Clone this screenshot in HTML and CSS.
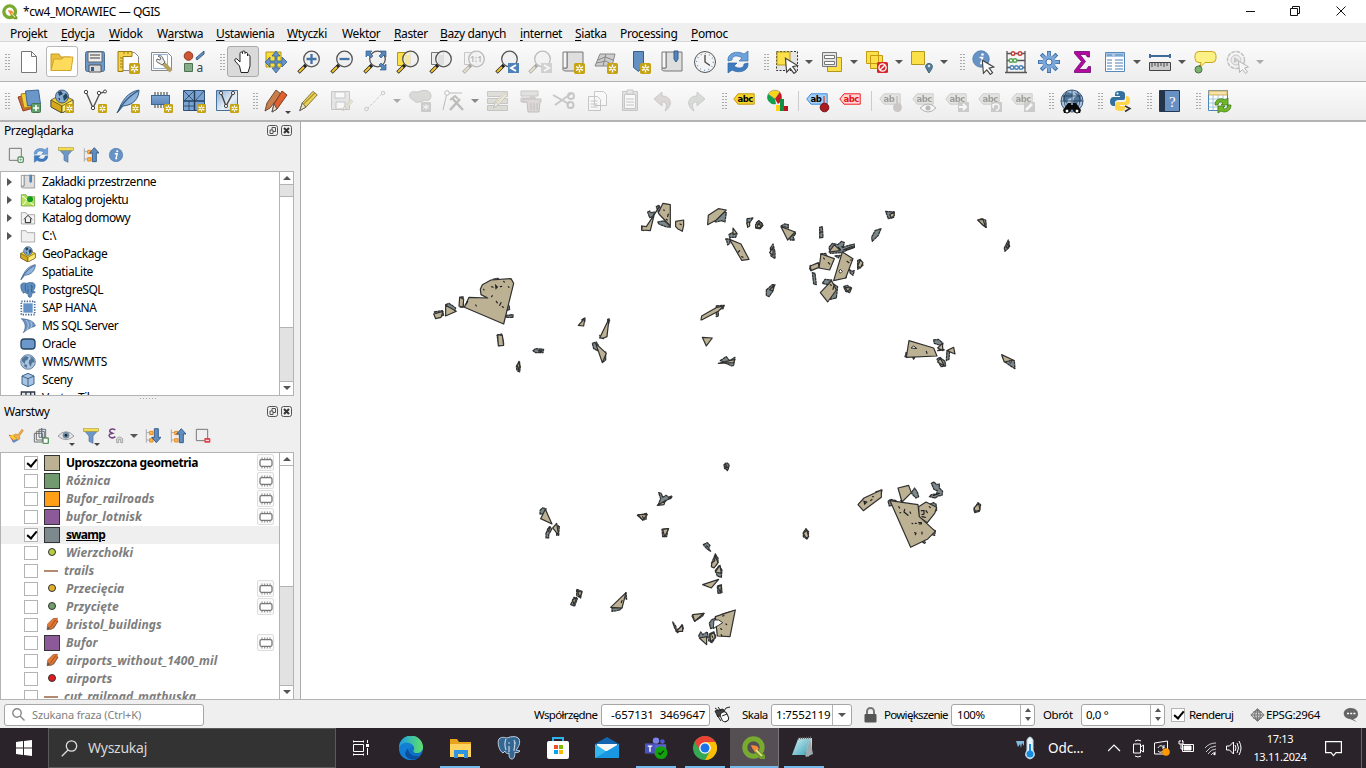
FILE: index.html
```html
<!DOCTYPE html>
<html lang="pl">
<head>
<meta charset="utf-8">
<title>*cw4_MORAWIEC — QGIS</title>
<link rel="stylesheet" href="styles.css">
</head>
<body>
<svg class="defs" width="0" height="0">
  <defs>
    <linearGradient id="gChip" x1="0" y1="0" x2="0" y2="1"><stop offset="0" stop-color="#7fa6d2"/><stop offset="1" stop-color="#5c86ba"/></linearGradient>
    <linearGradient id="gPane" x1="0" y1="0" x2="1" y2="1"><stop offset="0" stop-color="#8aacd2"/><stop offset=".6" stop-color="#e8eff7"/><stop offset="1" stop-color="#a9c3e0"/></linearGradient>
    <linearGradient id="gEdge" x1="0" y1="0" x2="1" y2="0"><stop offset="0" stop-color="#1b9de2"/><stop offset="1" stop-color="#5fe06a"/></linearGradient>
    <linearGradient id="gNote" x1="0" y1="0" x2="1" y2="1"><stop offset="0" stop-color="#d5f3f8"/><stop offset="1" stop-color="#3a9fb4"/></linearGradient>
  </defs>
  <symbol id="star" viewBox="0 0 10 10"><rect width="10" height="10" rx="1.5" fill="#c6a313"/><path d="M5 1.3v7.400M1.800 3.200l6.400 3.600M1.800 6.800l6.400-3.600" stroke="#fff" stroke-width="1.3"/><circle cx="5" cy="5" r="1" fill="#c6a313"/></symbol>
  <symbol id="lens" viewBox="0 0 24 24"><path d="M1.5 22.5L9 15" stroke="#222" stroke-width="3.4"/><path d="M2 22L7 17" stroke="#f3c42e" stroke-width="2"/><circle cx="14.5" cy="9" r="7.8" fill="#efefef" fill-opacity=".85" stroke="#555" stroke-width="1.3"/></symbol>
  <symbol id="refresh" viewBox="0 0 24 24"><path d="M2 11C1 3 11 0 18 4l4-3v10h-9l3-3C12 5 6 5 6 10z" fill="#6ea2da" stroke="#3873b0" stroke-width=".7"/><path d="M22 13c1 8-9 11-16 7l-4 3V13h9l-3 3c4 3 10 3 10-2z" fill="#3f7cc0" stroke="#2c66a5" stroke-width=".7"/></symbol>
  <symbol id="info" viewBox="0 0 24 24"><circle cx="12" cy="12" r="11" fill="#6692c5" stroke="#4a77ab"/><path d="M11 10h3l-2 8h2M10 10h2" stroke="#fff" stroke-width="2.2" fill="none"/><circle cx="14" cy="6" r="1.7" fill="#fff"/></symbol>
  <symbol id="cursor" viewBox="0 0 12 14"><path d="M1 1l10 6-4 1 3 4-2 1.5-3-4-3 3z" fill="#fff" stroke="#444"/></symbol>
  <symbol id="globe" viewBox="0 0 24 24"><circle cx="12" cy="12" r="11" fill="#aac4df" stroke="#3a5878"/><path d="M3 7l5-4 5 2-2 4-3 1-1 5-4-4zM14 3l6 3 2 6-4 1-2 6-3-5 1-5 3-2zM7 15l4 2-1 4-4-3z" fill="#4f7498"/></symbol>
  <symbol id="box" viewBox="0 0 24 24"><path d="M1 11l11-6 11 6v7l-11 6-11-6z" fill="#f3d331" stroke="#39362a" stroke-width=".7"/><path d="M1 11l11 6v7L1 18z" fill="#d6a91c" stroke="#39362a" stroke-width=".7"/><path d="M12 17l11-6v7l-11 6z" fill="#ffec6b" stroke="#39362a" stroke-width=".7"/><circle cx="12" cy="7.500" r="6.500" fill="#86abd1" stroke="#27425e" stroke-width=".8"/><path d="M8 3l3-1 2 3-4 2zM13 7l3-3 2 4-4 4zM8 9l2 0 0 3z" fill="#25425f"/></symbol>
  <symbol id="feather" viewBox="0 0 24 24"><path d="M2 23C6 11 12 3 23 1c0 8-5 15-16 16z" fill="#8db2dc" stroke="#365a82"/><path d="M1 24C7 13 13 7 22 2" stroke="#365a82" fill="none" stroke-width="1.3"/></symbol>
  <symbol id="elephant" viewBox="0 0 24 24"><path d="M2 3c3-3 7-1 8-1 5-2 10-2 12 1 2 4-1 9-3 11l4 1c-2 2-4 2-5 1 0 4-1 7-3 7-3 0-3-3-3-6-2 1-4 0-4-2l-2 2C2 15 0 6 2 3z"/><path d="M9 3c-2 4-1 8 0 11M17 4c2 4 0 7 0 11M12 10v6M19 7h-2M11 7h2" stroke-width="1.2" fill="none"/></symbol>
  <symbol id="chip" viewBox="0 0 14 12"><path d="M3 .5v11M5.700 .5v11M8.300 .5v11M11 .5v11" stroke="#888"/><rect x="1" y="2.700" width="12" height="6.600" rx="1.500" fill="#fff" stroke="#777" stroke-width="1.3"/></symbol>
  <symbol id="funnel" viewBox="0 0 24 24"><path d="M1 3h22l-8 9v11l-6-3v-8z" fill="#6d97c8" stroke="#4a719d"/><rect x="1" y="1" width="22" height="4" fill="#f2dc52" stroke="#a99322" stroke-width=".8"/></symbol>
  <symbol id="up" viewBox="0 0 24 24"><path d="M2 2v20M2 7h6M2 18h6" stroke="#aaa" stroke-width="1.500"/><path d="M7 5h5v5H7zM7 16h5v5H7z" fill="#fbb75f" stroke="#ee8a1a" stroke-width="1.500"/><path d="M17 1l7 8h-4v13h-6V9h-4z" fill="#5f8dc0" stroke="#2c5480" stroke-width="1.300"/></symbol>
  <symbol id="down" viewBox="0 0 24 24"><path d="M2 2v20M2 7h6M2 18h6" stroke="#aaa" stroke-width="1.500"/><path d="M7 5h5v5H7zM7 16h5v5H7z" fill="#fbb75f" stroke="#ee8a1a" stroke-width="1.500"/><path d="M17 22l7-8h-4V1h-6v13h-4z" fill="#5f8dc0" stroke="#2c5480" stroke-width="1.300"/></symbol>
  <symbol id="pen" viewBox="0 0 24 24"><path d="M2 23l3-9L17 1l5 4-13 14z" fill="#e9d15a" stroke="#77682c"/><path d="M7 15L19 3" stroke="#a8912c" stroke-width="1.4"/><path d="M2 23l3-9 4 5z" fill="#eadfc4" stroke="#555"/></symbol>
  <symbol id="rpen" viewBox="0 0 24 24"><path d="M1 22l2-8L12 1l5 4-11 14z" fill="#c97f4c" stroke="#6f4a35"/><path d="M8 23l2-8L18 2l5 4-10 14z" fill="#e0602e" stroke="#7c3b25"/><path d="M8 23l2-8 3 5z" fill="#f3d9c1" stroke="#555"/></symbol>
  <symbol id="edit" viewBox="0 0 24 24"><path d="M7 23l2-9L17 2l6 5-8 13z" fill="#6f6f6f"/><path d="M2 23l1-11L13 2l8-1-1 9-9 11z" fill="#e07a35" stroke="#8a4a22"/><path d="M8 18L18 4" stroke="#b9501f" stroke-width="2"/><path d="M2 23l1-7 5 4z" fill="#555"/></symbol>
  <symbol id="qgis" viewBox="0 0 24 24"><circle cx="11.5" cy="11.5" r="8.7" fill="none" stroke="#79aa30" stroke-width="5"/><path d="M14 13l9 6v4h-5l-6-8z" fill="#6f9c2c"/><path d="M9 9l6 1 2 3-4 3-3-4z" fill="#f48a35"/><path d="M14 14l6 6" stroke="#f7e58b" stroke-width="1.6"/></symbol>
  <symbol id="tag" viewBox="0 0 22 12"><path d="M5 .8h16.2v10.4H5L.8 6z"/></symbol>
  <symbol id="book" viewBox="0 0 24 24"><path d="M6 2h16v19H5c-4 0-4-3-2-3h3z" fill="#dedede" stroke="#777"/><path d="M2 2h4v16H2z" fill="#f7f7f7" stroke="#777"/></symbol>
  <symbol id="page" viewBox="0 0 24 24"><path d="M2.500 2.500h16l4 4v14h-20z" fill="#fff" stroke="#888"/></symbol>
</svg>

<header class="titlebar">
  <svg class="logo" viewBox="0 0 24 24"><use href="#qgis"/></svg>
  <span class="caption">*cw4_MORAWIEC — QGIS</span>
  <svg class="winctl" width="116" height="22" viewBox="0 0 116 22" fill="none" stroke="#111"><path d="M6 10.500h9"/><path d="M50.500 7.500h7v7h-7zM52.500 7.500v-2h7v7h-2"/><path d="M96.500 5.500l9 9M105.500 5.500l-9 9"/></svg>
</header>

<nav class="menu">
  <span style="width:51px">Pro<u>j</u>ekt</span><span style="width:48px"><u>E</u>dycja</span><span style="width:48px"><u>W</u>idok</span><span style="width:59px">W<u>a</u>rstwa</span><span style="width:71px"><u>U</u>stawienia</span><span style="width:55px"><u>W</u>tyczki</span><span style="width:52px">Wekt<u>o</u>r</span><span style="width:46px"><u>R</u>aster</span><span style="width:80px"><u>B</u>azy danych</span><span style="width:55px"><u>i</u>nternet</span><span style="width:45px"><u>S</u>iatka</span><span style="width:71px">Pro<u>c</u>essing</span><span><u>P</u>omoc</span>
</nav>

<div class="toolbar">
  <i class="grip first"></i>
  <b><svg viewBox="0 0 24 24"><path d="M4.500 1.500h10l5 5v16h-15z" fill="#fff" stroke="#777"/><path d="M14.500 1.500v5h5" fill="none" stroke="#777"/></svg></b>
  <b class="framed"><svg viewBox="0 0 24 24"><path d="M1 20V4h8l2 3h9v4" fill="#eac03c" stroke="#c39a26"/><path d="M1 20.500L4 9h8l2-2h9l-2 13.500z" fill="#ffdb5c" stroke="#d0a52c"/></svg></b>
  <b><svg viewBox="0 0 24 24"><rect x="2.500" y="1.500" width="19" height="20" rx="2" fill="#6d98c8" stroke="#47719d"/><path d="M5 2h14v10H5z" fill="#eee" stroke="#666"/><path d="M7 5h10M7 8h10" stroke="#777" stroke-width="1.500"/><path d="M6 15h12v7H6z" fill="#ddd" stroke="#555"/><path d="M8 17h3v4H8z" fill="#345f8c"/></svg></b>
  <b><svg viewBox="0 0 24 24"><use href="#page"/><path d="M2 1.500h14v5H7v15H2z" fill="#f5d24d" stroke="#9b7c14"/><path d="M4 8h3M4 11h3M4 14h3M4 17h3M8 2v2M12 2v2" stroke="#9b7c14"/><use href="#star" x="13" y="13" width="11" height="11"/></svg></b>
  <b><svg viewBox="0 0 24 24"><use href="#page"/><path d="M4.500 4.500h14v14h-14z" fill="#fff" stroke="#8fb3dc"/><path d="M14 13l8 8" stroke="#b5a060" stroke-width="4"/><path d="M9 6c2-1 5 0 5 3l2 3-3 3-3-2c-2 0-3-2-2-4l3 1 1-2z" fill="#eee" stroke="#666"/></svg></b>
  <b><svg viewBox="0 0 24 24"><circle cx="6.500" cy="6" r="4.300" fill="#cf5635" stroke="#8e3822"/><path d="M14 8l8-7v3l-7 6z" fill="#6792c6" stroke="#345b86"/><path d="M2.500 13.500h8v8h-8z" fill="#84ac88" stroke="#4a7350"/><text x="14.500" y="21.500" font-size="12" font-weight="400" fill="#444">a</text></svg></b>
  <i class="grip"></i>
  <b class="pressed"><svg viewBox="0 0 24 24"><path d="M7 16L2.500 11c-1-2 1-3 2-2l3 3V3.500c0-2 2.500-2 2.500 0V2c0-1.500 2.500-1.500 2.500 0v1.500c0-1.500 2.500-1.500 2.500 0V6c0-1.500 2.500-1.500 2.500.5V16l-2 6.500h-7z" fill="#fff" stroke="#222" transform="translate(1.500)"/></svg></b>
  <b><svg viewBox="0 0 24 24"><path d="M2 2h15v15H2z" fill="#fbdd39" stroke="#b3961d"/><path d="M12 1l4 5h-3v5h5V7l5 5-5 5v-4h-5v5h3l-4 5-4-5h3v-5H6v4l-5-5 5-5v4h5V6H8z" fill="#6593c7" stroke="#345f8d" stroke-width=".8"/></svg></b>
  <b><svg viewBox="0 0 24 24"><use href="#lens"/><path d="M9.500 9h10M14.500 4v10" stroke="#4473a5" stroke-width="2.300"/></svg></b>
  <b><svg viewBox="0 0 24 24"><use href="#lens"/><path d="M9.500 9h10" stroke="#4473a5" stroke-width="2.300"/></svg></b>
  <b><svg viewBox="0 0 24 24"><use href="#lens"/><path d="M3 1h6L7 3l3 3-2 2-3-3-2 2zM23 1h-6l2 2-3 3 2 2 3-3 2 2zM23 20h-6l2-2-3-3 2-2 3 3 2-2z" fill="#5485bb" stroke="#345f8d" stroke-width=".7"/></svg></b>
  <b><svg viewBox="0 0 24 24"><path d="M1.500 2.500h13v13h-13z" fill="#fbe04a" stroke="#b3961d"/><use href="#lens"/><path d="M9 5h5v9H9z" fill="#f3e7a1"/></svg></b>
  <b><svg viewBox="0 0 24 24"><path d="M2.500 2.500h12v12h-12z" fill="#eee" stroke="#777"/><use href="#lens"/><path d="M9 5h5v9H9z" fill="#dedede"/></svg></b>
  <b class="off"><svg viewBox="0 0 24 24"><path d="M2.500 2.500h12v12h-12z" fill="#eee" stroke="#777"/><use href="#lens"/><text x="8" y="12" font-size="8.500" font-weight="700" fill="#555">1:1</text></svg></b>
  <b><svg viewBox="0 0 24 24"><use href="#lens"/><path d="M13 13h11v10H13z" fill="#4e81b7"/><path d="M21 15l-5 3 5 3" stroke="#fff" stroke-width="2" fill="none"/></svg></b>
  <b class="off"><svg viewBox="0 0 24 24"><use href="#lens"/><path d="M13 13h11v10H13z" fill="#999"/><path d="M16 15l5 3-5 3" stroke="#fff" stroke-width="2" fill="none"/></svg></b>
  <b><svg viewBox="0 0 24 24"><use href="#book"/><use href="#star" x="13" y="13" width="11" height="11"/></svg></b>
  <b><svg viewBox="0 0 24 24"><path d="M6 4h15l-3 12H1z" fill="#ccc" stroke="#888"/><path d="M4 10l7-3 8 3M9 16l3-12M2 13l10-2 5 3" stroke="#888" fill="none"/><use href="#star" x="13" y="13" width="11" height="11"/></svg></b>
  <b><svg viewBox="0 0 24 24"><path d="M6.500 1.500h10v14l-5 6-5-4z" fill="#6290c3" stroke="#345f8d"/><use href="#star" x="13" y="13" width="11" height="11"/></svg></b>
  <b><svg viewBox="0 0 24 24"><use href="#book"/><path d="M14 1h4v8l-2 3-2-3z" fill="#5484bb" stroke="#345f8d"/></svg></b>
  <b><svg viewBox="0 0 24 24"><circle cx="12" cy="12" r="10.500" fill="#f4f4f4" stroke="#555"/><circle cx="12" cy="12" r="8.300" fill="none" stroke="#6d9acb" stroke-dasharray="1 3.300" stroke-width="1.300"/><path d="M12 5v7l5 3.500" fill="none" stroke="#444" stroke-width="1.300"/></svg></b>
  <b><svg viewBox="0 0 24 24"><use href="#refresh"/></svg></b>
  <i class="grip"></i>
  <b><svg viewBox="0 0 24 24"><path d="M1.500 1.500h21v19h-21z" fill="#e5e5e5" stroke="#333" stroke-dasharray="2 1.500"/><path d="M2 2h13v13H2z" fill="#fbe04a" stroke="#b39a1a"/><use href="#cursor" x="9" y="7" width="15" height="17"/></svg></b><i class="arr"></i>
  <b><svg viewBox="0 0 24 24"><path d="M7.500 7.500h14v14h-14z" fill="#fbe04a" stroke="#b3961d"/><path d="M2.500 2.500h14v14h-14z" fill="#e4e4e4" stroke="#777"/><path d="M4.500 5.500h10v3h-10zM4.500 11.500h10v3h-10z" fill="#fff" stroke="#777"/></svg></b><i class="arr"></i>
  <b><svg viewBox="0 0 24 24"><path d="M1.500 1.500h12v12h-12zM5.500 5.500h12v13h-12z" fill="#fbe04a" stroke="#c39a12"/><rect x="12" y="12" width="11" height="11" rx="1.500" fill="#d8262b"/><circle cx="17.500" cy="17.500" r="3.600" fill="none" stroke="#fff" stroke-width="1.400"/><path d="M15 20l5-5" stroke="#fff" stroke-width="1.400"/></svg></b><i class="arr"></i>
  <b><svg viewBox="0 0 24 24"><path d="M1.500 1.500h13v13h-13z" fill="#fbe04a" stroke="#b3961d"/><path d="M19 23c-3-5-4-6-3-8s5-2 6 0 0 4-3 8z" fill="#547d99" stroke="#3c6178"/><circle cx="19" cy="16" r="1.300" fill="#ddd"/></svg></b><i class="arr"></i>
  <i class="grip"></i>
  <b><svg viewBox="0 0 24 24"><use href="#info" x="1" y="0" width="18" height="18"/><use href="#cursor" x="10" y="9" width="14" height="16"/></svg></b>
  <b><svg viewBox="0 0 24 24"><path d="M3 1v21M21 1v21M1 22.500h22M3 3.500h18M3 10.500h18M3 17.500h18" stroke="#555" stroke-width="1.300"/><g fill="#fff" stroke-width="1.400"><g stroke="#c4423c"><circle cx="9" cy="3.500" r="1.800"/><circle cx="16" cy="3.500" r="1.800"/></g><g stroke="#56a856"><circle cx="7" cy="10.500" r="1.800"/><circle cx="11" cy="10.500" r="1.800"/></g><g stroke="#4a82b8"><circle cx="8" cy="17.500" r="1.800"/><circle cx="12.500" cy="17.500" r="1.800"/><circle cx="17" cy="17.500" r="1.800"/></g></g></svg></b>
  <b><svg viewBox="0 0 24 24"><path d="M12 1v22M1 12h22M4.200 4.200l15.600 15.600M19.800 4.200L4.200 19.800" stroke="#3f73ae" stroke-width="4"/><path d="M12 2v20M2 12h20M5 5l14 14M19 5L5 19" stroke="#7ba6d6" stroke-width="2.400"/><circle cx="12" cy="12" r="6.800" fill="#7ba6d6"/><circle cx="12" cy="12" r="3" fill="#f7f7f7" stroke="#3f73ae"/></svg></b>
  <b><svg viewBox="0 0 24 24"><path d="M4.500 1.500h15V7h-2l-2-2.500H10l5.500 7-6.500 8h7.500l2-3h2v6h-16v-2l7-9-7-8z" fill="#b5089e" stroke="#6a0a72" stroke-width=".8"/></svg></b>
  <b><svg viewBox="0 0 24 24"><path d="M2.500 2.500h19v19h-19z" fill="#fff" stroke="#5687bd"/><path d="M3 3h18v4H3z" fill="#a9c6e5"/><path d="M4 5h5M12 5h8M4 10h5M12 10h8M4 13h5M12 13h8M4 16h5M12 16h8M4 19h5M12 19h8" stroke="#4d80b8"/></svg></b><i class="arr"></i>
  <b><svg viewBox="0 0 24 24"><path d="M2 6h20M2 4v4M22 4v4" stroke="#3f6a99" stroke-width="2"/><path d="M1.500 12.500h21v8h-21z" fill="#ccc" stroke="#444"/><path d="M4 13v4M7 13v3M10 13v4M13 13v3M16 13v4M19 13v3" stroke="#444"/></svg></b><i class="arr"></i>
  <b><svg viewBox="0 0 24 24"><path d="M6 1.500h13q4 0 4 4v3q0 4-4 4h-7l-5 5 1-5H6q-4 0-4-4v-3q0-4 4-4z" fill="#fdf084" stroke="#c9a61c"/><path d="M7 15l-2 6" stroke="#333"/><circle cx="5.500" cy="19.500" r="3.500" fill="#7bb26f" stroke="#4b6f45"/></svg></b>
  <b class="off"><svg viewBox="0 0 24 24"><circle cx="10" cy="10" r="8.500" fill="#f4f4f4" stroke="#666" stroke-width="1.500" stroke-dasharray="4 1"/><circle cx="10" cy="10" r="5" fill="#ddd" stroke="#777"/><path d="M8 7l5 3-5 3z" fill="#777"/><use href="#cursor" x="11" y="10" width="13" height="14"/></svg></b><i class="arr pale"></i>
</div>

<div class="toolbar second">
  <i class="grip first"></i>
  <b><svg viewBox="0 0 24 24"><path d="M1 8l12-3 4 14-11 3z" fill="#cd6936" stroke="#8e4423"/><path d="M4 5l14-2 2 14-13 2z" fill="#f2cc3a" stroke="#a17f18"/><path d="M9 2l13-1 2 14-13 2z" fill="#6b96c8" stroke="#3d6792" transform="translate(-.500)"/><rect x="14.500" y="14.500" width="9" height="9" rx="1" fill="#61a06c" stroke="#47764e"/><path d="M19 16v6M16 19h6" stroke="#fff" stroke-width="1.600"/></svg></b>
  <b><svg viewBox="0 0 24 24"><use href="#box"/><use href="#star" x="15" y="15" width="9" height="9"/></svg></b>
  <b><svg viewBox="0 0 24 24"><path d="M3 3l7 16L17 4l5-1" fill="none" stroke="#555" stroke-width="1.400"/><g fill="#fff" stroke="#444"><circle cx="3" cy="3" r="1.700"/><circle cx="10" cy="19" r="1.700"/><circle cx="16" cy="4" r="1.700"/><circle cx="22" cy="2.500" r="1.500"/></g><use href="#star" x="15" y="15" width="9" height="9"/></svg></b>
  <b><svg viewBox="0 0 24 24"><use href="#feather"/><use href="#star" x="15" y="15" width="9" height="9"/></svg></b>
  <b><svg viewBox="0 0 24 24"><path d="M6 3v16M9 3v16M12 3v16M15 3v16M18 3v16" stroke="#555" stroke-width="1.200"/><rect x="2.500" y="6.500" width="18" height="9" fill="url(#gChip)" stroke="#3d6792"/><use href="#star" x="15" y="15" width="9" height="9"/></svg></b>
  <b><svg viewBox="0 0 24 24"><path d="M1.500 1.500h21v20h-21z" fill="#7ba3d1" stroke="#2f5379"/><path d="M12.500 2v20M2 12h20" stroke="#23415f" stroke-width="1.500"/><path d="M7 12v10M2 17h10M2 2l10 10M12 2L2 12M13 12L22 2" stroke="#23415f" fill="none" stroke-width=".8"/><use href="#star" x="15" y="15" width="9" height="9"/></svg></b>
  <b><svg viewBox="0 0 24 24"><path d="M1.500 1.500h21v20h-21z" fill="url(#gPane)" stroke="#47719d"/><path d="M6 4l5 13 7-13" fill="none" stroke="#444" stroke-width="1.400"/><g fill="#fff" stroke="#444"><circle cx="6" cy="4" r="1.600"/><circle cx="11" cy="17" r="1.600"/><circle cx="18" cy="4" r="1.600"/></g><use href="#star" x="15" y="15" width="9" height="9"/></svg></b>
  <i class="grip"></i>
  <b class="corner"><svg viewBox="0 0 24 24"><use href="#rpen"/></svg></b>
  <b><svg viewBox="0 0 24 24"><use href="#pen" x="1" y="1" width="21" height="22"/></svg></b>
  <b class="off"><svg viewBox="0 0 24 24"><path d="M1.500 2.500h18v18h-18z" fill="#ccc" stroke="#777"/><path d="M5 3h10v6H5zM6 13h9v7H6z" fill="#fff" stroke="#777"/><use href="#pen" x="12" y="10" width="12" height="12"/></svg></b>
  <b class="off"><svg viewBox="0 0 24 24"><path d="M4 20L20 4" stroke="#777" stroke-dasharray="3 1.500"/><g fill="#eee" stroke="#777"><circle cx="3.500" cy="20" r="1.800"/><circle cx="20" cy="4" r="1.800"/></g></svg></b><i class="arr pale"></i>
  <b class="off"><svg viewBox="0 0 24 24"><path d="M2 8c-2-7 6-5 8-5 6-3 13-2 13 4 0 4-3 5-7 4-4 3-10 3-10 0-2 0-3-1-4-3z" fill="#a7aca0" stroke="#777"/><rect x="13" y="13" width="10" height="10" rx="1" fill="#888"/><path d="M18 15v6M15 16.500l6 3M15 19.500l6-3" stroke="#fff"/></svg></b>
  <b class="off"><svg viewBox="0 0 24 24"><path d="M2 21L6 4h15" stroke="#555" fill="none"/><circle cx="6" cy="4" r="2.300" fill="#fff" stroke="#555"/><path d="M11 9l11 12M19 10L9 21" stroke="#665e52" stroke-width="2.500"/><path d="M9 11l5-4 3 3" stroke="#665e52" stroke-width="2" fill="none"/></svg></b><i class="arr dim"></i>
  <b class="off"><svg viewBox="0 0 24 24"><path d="M1.500 2.500h20v5h-20zM1.500 9.500h20v5h-20zM1.500 16.500h20v5h-20z" fill="#b9b48c" stroke="#777"/><use href="#pen" x="6" y="1" width="17" height="20"/></svg></b>
  <b class="off"><svg viewBox="0 0 24 24"><path d="M2 2h17v5H2zM2 9h8v4H2z" fill="#c6b9b4" stroke="#777"/><path d="M4 10h18v3h-1l-1 10H9L8 13H4zM11 10V8h5v2M12 14v7M15 14v7M18 14v7" fill="#c4a5a5" stroke="#80605f"/></svg></b>
  <b class="off"><svg viewBox="0 0 24 24"><path d="M1 6l16 9M3 16L20 4" stroke="#777" stroke-width="2"/><circle cx="19" cy="7" r="3" fill="none" stroke="#777" stroke-width="2"/><circle cx="18.500" cy="16" r="3" fill="none" stroke="#777" stroke-width="2"/></svg></b>
  <b class="off"><svg viewBox="0 0 24 24"><path d="M9.500 2.500h9l3 3v11h-12zM3.500 7.500h9l3 3v11h-12z" fill="#fff" stroke="#777"/><path d="M5.500 12h7M5.500 15h7M5.500 18h7" stroke="#777"/></svg></b>
  <b class="off"><svg viewBox="0 0 24 24"><path d="M4.500 2.500h15v19h-15z" fill="#bbb" stroke="#777"/><path d="M6.500 5.500h11v14h-11z" fill="#fff" stroke="#777"/><path d="M9 1h6v4H9z" fill="#ccc" stroke="#777"/><path d="M8 10h8M8 13h8M8 16h8" stroke="#777"/></svg></b>
  <b class="off"><svg viewBox="0 0 24 24"><path d="M3 10l8-7v4c10 0 11 10 3 15 3-7 1-9-3-9v4z" fill="#b5a294" stroke="#8a7a6e"/></svg></b>
  <b class="off"><svg viewBox="0 0 24 24"><path d="M21 10l-8-7v4c-10 0-11 10-3 15-3-7-1-9 3-9v4z" fill="#a3b19c" stroke="#7c8878"/></svg></b>
  <i class="grip"></i>
  <b><svg viewBox="0 0 24 24" class="tag"><use href="#tag" x="0" y="4" width="22" height="12" fill="#f8d429" stroke="#bf9a15"/><text x="4.500" y="13">abc</text></svg></b>
  <b><svg viewBox="0 0 24 24"><path d="M9 10L2 5A8 8 0 0 1 14 3z" fill="#f6d51f" stroke="#777" stroke-width=".500"/><path d="M9 10l5-7a8 8 0 0 1-2 12z" fill="#c71920"/><path d="M9 10l1 5A7 7 0 0 1 2 5z" fill="#14a051"/><path d="M14 10h4v12h-4z" fill="#118e43"/><path d="M10 16h4v6h-4z" fill="#ffd20d"/><path d="M18 17h4v5h-4z" fill="#b9151b"/></svg></b>
  <i class="rule"></i>
  <b><svg viewBox="0 0 24 24" class="tag"><use href="#tag" x="0" y="4" width="22" height="12" fill="#a5cff6" stroke="#3f8be0"/><text x="4.500" y="13">ab</text><path d="M18 16V7" stroke="#b77" stroke-width="2"/><circle cx="18.500" cy="18.500" r="4.300" fill="#a91d23" stroke="#75151a"/></svg></b>
  <b><svg viewBox="0 0 24 24" class="tag"><use href="#tag" x="0" y="4" width="22" height="12" fill="#ffd9d9" stroke="#f21b1b"/><text x="4.500" y="13" fill="#e01414">abc</text></svg></b>
  <i class="rule"></i>
  <b class="off"><svg viewBox="0 0 24 24" class="tag"><use href="#tag" x="0" y="4" width="22" height="12" fill="#c6c6ad" stroke="#888"/><text x="4.500" y="13">ab</text><path d="M18 16V7" stroke="#977" stroke-width="2"/><circle cx="18.500" cy="18.500" r="4.500" fill="#977"/></svg></b>
  <b class="off"><svg viewBox="0 0 24 24" class="tag"><use href="#tag" x="0" y="4" width="22" height="12" fill="#c6c6ad" stroke="#888"/><text x="4.500" y="13">abc</text><path d="M8 19q8-8 16 0-8 8-16 0z" fill="#fff" stroke="#444"/><circle cx="16" cy="19" r="2.500" fill="#555"/></svg></b>
  <b class="off"><svg viewBox="0 0 24 24" class="tag"><use href="#tag" x="0" y="4" width="22" height="12" fill="#c6c6ad" stroke="#888"/><text x="4.500" y="13">abc</text><path d="M13 13h11v10H13z" fill="#888"/><path d="M14 18h7M18 15l3 3-3 3" stroke="#fff" stroke-width="2" fill="none"/></svg></b>
  <b class="off"><svg viewBox="0 0 24 24" class="tag"><use href="#tag" x="0" y="4" width="22" height="12" fill="#c6c6ad" stroke="#888"/><text x="4.500" y="13">abc</text><path d="M13 13h11v10H13z" fill="#888"/><path d="M15 19v-4M15 18c0-4 6-4 6 0s-3 3-3 3" stroke="#fff" stroke-width="1.500" fill="none"/></svg></b>
  <b class="off"><svg viewBox="0 0 24 24" class="tag"><use href="#tag" x="0" y="4" width="22" height="12" fill="#c6c6ad" stroke="#888"/><text x="4.500" y="13">abc</text><path d="M13 13h11v10H13z" fill="#888"/><path d="M15 21l6-6" stroke="#fff" stroke-width="2.500"/></svg></b>
  <i class="grip"></i>
  <b><svg viewBox="0 0 24 24"><use href="#globe" x="0" y="0" width="24" height="24"/><path d="M2 7h20M1 12h22M12 1v21M7 2q-6 9 0 18M17 2q6 9 0 18" stroke="#20374f" fill="none" stroke-width=".700"/><path d="M8 14h3v2h2v-2h3l5 7-1 3h-5l-3-4-3 4H4l-1-3z" fill="#0a0a0a"/><circle cx="7" cy="22" r="2" fill="#fff" stroke="#000"/><circle cx="17" cy="22" r="2" fill="#fff" stroke="#000"/></svg></b>
  <i class="grip"></i>
  <b><svg viewBox="0 0 24 24"><path d="M11 2c-5 0-5 1-5 5h5v1H4c-4 0-4 9 0 9h2v-3c0-2 1-3 4-3h4c2 0 2-1 2-3V5c0-2-2-3-5-3z" fill="#33709f"/><path d="M11 22c5 0 5-1 5-5h-5v-1h7c4 0 4-9 0-9h-1v4c0 2-2 2-4 2H9c-3 0-3 2-3 4v2c0 2 2 3 5 3z" fill="#ffd54a"/><circle cx="8.500" cy="4.500" r="1" fill="#fff"/><path d="M16 17l5 2.500-5 3" stroke="#333" stroke-width="1.500" fill="none"/></svg></b>
  <i class="grip"></i>
  <b><svg viewBox="0 0 24 24"><path d="M1.500 1.500h20v21h-20z" fill="#6791c3" stroke="#263850"/><path d="M2 2h5v20H2z" fill="#26344a"/><text x="11" y="18" font-size="15" font-weight="400" fill="#fff" class="serif">?</text></svg></b>
  <i class="grip"></i>
  <b><svg viewBox="0 0 24 24"><path d="M1.500 1.500h19v20h-19z" fill="#fff" stroke="#4b87b9"/><path d="M2 2h18v4H2z" fill="#f8e4a6" stroke="#d1ad5e"/><path d="M2 10h18M2 14h18M2 18h18M6 6v15M11 6v15M16 6v15" stroke="#a4c3dd"/><path d="M8 16c0-7 7-7 10-5l3-2v7h-7l2-2c-2-2-5-1-5 2zM24 16c0 7-7 8-10 6l-3 2v-7h7l-2 2c2 2 5 0 5-3z" fill="#70b829" stroke="#3f7c15" stroke-width=".800"/></svg></b>
</div>

<main class="work">
  <aside class="dock">
    <section class="browser">
      <h2>Przeglądarka<svg width="26" height="12" viewBox="0 0 26 12"><g fill="none" stroke="#555"><rect x=".500" y=".500" width="10" height="10" rx="2"/><path d="M3 5h3v3.500H3zM5 5V2.500h3.500v4H6"/><rect x="14.500" y=".500" width="10" height="10" rx="2"/><path d="M17 3l5 5M22 3l-5 5" stroke="#333" stroke-width="2"/></g></svg></h2>
      <div class="mini">
        <b><svg viewBox="0 0 24 24"><path d="M2 2h18v18H2z" fill="none" stroke="#777" stroke-width="1.500"/><rect x="15" y="15" width="8" height="8" rx="2" fill="#fff" stroke="#5b9362" stroke-width="2"/><path d="M19 17v4M17 19h4" stroke="#5b9362"/></svg></b>
        <b><svg viewBox="0 0 24 24"><use href="#refresh"/></svg></b><b><svg viewBox="0 0 24 24"><use href="#funnel"/></svg></b><b><svg viewBox="0 0 24 24"><use href="#up"/></svg></b><b><svg viewBox="0 0 24 24"><use href="#info" x="1" y="1" width="22" height="22"/></svg></b>
      </div>
      <div class="pane">
        <ul class="tree">
          <li class="fold"><svg viewBox="0 0 24 24"><use href="#book"/><path d="M14 1h4v10l-2 3-2-3z" fill="#5484bb"/></svg>Zakładki przestrzenne</li>
          <li class="fold"><svg viewBox="0 0 24 24"><path d="M2 21V4h7l2 3h11v14z" fill="#b8e25b" stroke="#5d8c2e"/><path d="M3 6l18 14M4 20l6-7" stroke="#fff" stroke-width="1.500"/><circle cx="15" cy="11" r="4.500" fill="#129b1f"/></svg>Katalog projektu</li>
          <li class="fold"><svg viewBox="0 0 24 24"><path d="M2 21V4h7l2 3h11v14z" fill="#f2f2f2" stroke="#888"/><path d="M6 14l6-6 6 6M8 13v6h8v-6" fill="none" stroke="#222" stroke-width="1.500"/></svg>Katalog domowy</li>
          <li class="fold"><svg viewBox="0 0 24 24"><path d="M2 21V4h7l2 3h11v14z" fill="#f0f0f0" stroke="#888"/></svg>C:\</li>
          <li><svg viewBox="0 0 24 24"><use href="#box"/></svg>GeoPackage</li>
          <li><svg viewBox="0 0 24 24"><use href="#feather"/></svg>SpatiaLite</li>
          <li><svg viewBox="0 0 24 24" class="pg"><use href="#elephant"/></svg>PostgreSQL</li>
          <li><svg viewBox="0 0 24 24"><path d="M5 5h14v14H5z" fill="#6592c6"/><path d="M2 2h20v20H2z" fill="none" stroke="#456b94" stroke-width="2.500" stroke-dasharray="2 2"/></svg>SAP HANA</li>
          <li><svg viewBox="0 0 24 24"><path d="M2 1c13 1 20 5 21 11-5 2-10 3-18 10 5-9 3-15-3-21z" fill="#6b94c4" stroke="#385c84"/><path d="M9 3c5 5 4 11 1 15M15 5c4 4 3 7 1 10" stroke="#d9e6f4" fill="none"/></svg>MS SQL Server</li>
          <li><svg viewBox="0 0 24 24"><rect x="1.500" y="4.500" width="21" height="15" rx="5" fill="#6b97ca" stroke="#27425f" stroke-width="2"/></svg>Oracle</li>
          <li><svg viewBox="0 0 24 24"><use href="#globe"/></svg>WMS/WMTS</li>
          <li><svg viewBox="0 0 24 24"><path d="M3 6l9-4 9 4v12l-9 4-9-4z" fill="#a9c4e2" stroke="#3d658f" stroke-width="1.500"/><path d="M3 6l9 4 9-4M12 10v12" fill="none" stroke="#3d658f" stroke-width="1.500"/></svg>Sceny</li>
          <li><svg viewBox="0 0 24 24"><path d="M2 3h20v19H2z" fill="#dce4ee" stroke="#333a44" stroke-width="2"/><path d="M9 3v18M16 3v18M2 10h20M2 16h20" stroke="#333a44" stroke-width="2"/></svg>Vector Tiles</li>
        </ul>
        <div class="scroll one"><i class="su"></i><i class="stub"></i><i class="thumb"></i><i class="rest"></i><i class="sd"></i></div>
      </div>
    </section>
    <div class="split"></div>
    <section class="layers">
      <h2>Warstwy<svg width="26" height="12" viewBox="0 0 26 12"><g fill="none" stroke="#555"><rect x=".500" y=".500" width="10" height="10" rx="2"/><path d="M3 5h3v3.500H3zM5 5V2.500h3.500v4H6"/><rect x="14.500" y=".500" width="10" height="10" rx="2"/><path d="M17 3l5 5M22 3l-5 5" stroke="#333" stroke-width="2"/></g></svg></h2>
      <div class="mini lay">
        <b><svg viewBox="0 0 24 24"><path d="M1 10l6 1 5 8-4 3z" fill="#e7503e"/><path d="M6 19l7-4 3 3-7 4z" fill="#5792d0"/><path d="M2 12l8-3 6 7-8 2z" fill="#f3cc38"/><path d="M11 9l4 1 6-8 2 2-6 8 1 4-3 2-6-6z" fill="#f0b04a" stroke="#c58527"/></svg></b>
        <b><svg viewBox="0 0 24 24"><path d="M2 8h12v13H2zM5 5h12v13H5zM9 2h10v12H9z" fill="#eef2f6" stroke="#666" stroke-width="1.400"/><path d="M13 0v14" stroke="#4b7ab0" stroke-width="2"/><rect x="15" y="15" width="8" height="8" rx="1" fill="#fff" stroke="#5b9362" stroke-width="2"/></svg></b>
        <b class="corner"><svg viewBox="0 0 24 24"><path d="M0 12q12-13 24 0-12 11-24 0z" fill="#e6e6e6" stroke="#777"/><circle cx="12" cy="11" r="5" fill="#6f8da9"/><circle cx="12" cy="11" r="2" fill="#222"/></svg></b>
        <b class="corner"><svg viewBox="0 0 24 24"><use href="#funnel"/></svg></b>
        <b><svg viewBox="0 0 24 24"><path d="M11 3C7 0 1 2 3 6l4 2-4 1c-4 4 3 8 8 4" fill="none" stroke="#75457f" stroke-width="2.300"/><path d="M13 22v-6q4-5 9 0v6h-3v-5h-3v5z" fill="#ddd" stroke="#888"/></svg></b><i class="arr"></i>
        <b><svg viewBox="0 0 24 24"><use href="#down"/></svg></b><b><svg viewBox="0 0 24 24"><use href="#up"/></svg></b>
        <b><svg viewBox="0 0 24 24"><path d="M2 2h17v17H2z" fill="none" stroke="#777" stroke-width="1.500"/><rect x="14" y="15" width="9" height="7" rx="1.500" fill="#e0404a"/><path d="M16 18.500h5" stroke="#fff" stroke-width="1.500"/></svg></b>
      </div>
      <div class="pane">
        <ul class="tree lyr">
          <li class="on"><s class="c y"></s><s class="sw tan"></s><span>Uproszczona geometria</span><em><svg><use href="#chip"/></svg></em></li>
          <li><s class="c"></s><s class="sw green"></s><span>Różnica</span><em><svg><use href="#chip"/></svg></em></li>
          <li><s class="c"></s><s class="sw orange"></s><span>Bufor_railroads</span><em><svg><use href="#chip"/></svg></em></li>
          <li><s class="c"></s><s class="sw purple"></s><span>bufor_lotnisk</span><em><svg><use href="#chip"/></svg></em></li>
          <li class="on cur"><s class="c y"></s><s class="sw slate"></s><span>swamp</span></li>
          <li><s class="c"></s><s class="dot lime"></s><span>Wierzchołki</span></li>
          <li><s class="c"></s><s class="line"></s><span>trails</span></li>
          <li><s class="c"></s><s class="dot gold"></s><span>Przecięcia</span><em><svg><use href="#chip"/></svg></em></li>
          <li><s class="c"></s><s class="dot leaf"></s><span>Przycięte</span><em><svg><use href="#chip"/></svg></em></li>
          <li><s class="c"></s><svg class="ed" viewBox="0 0 24 24"><use href="#edit"/></svg><span>bristol_buildings</span></li>
          <li><s class="c"></s><s class="sw purple"></s><span>Bufor</span><em><svg><use href="#chip"/></svg></em></li>
          <li><s class="c"></s><svg class="ed" viewBox="0 0 24 24"><use href="#edit"/></svg><span>airports_without_1400_mil</span></li>
          <li><s class="c"></s><s class="dot red"></s><span>airports</span></li>
          <li><s class="c"></s><s class="line"></s><span>cut_railroad_mathuska</span></li>
        </ul>
        <div class="scroll two"><i class="su"></i><i class="thumb"></i><i class="rest"></i><i class="sd"></i></div>
      </div>
    </section>
  </aside>
  <svg class="canvas" width="1065" height="577" viewBox="301 122 1065 577">
    <!-- north-west cluster -->
    <g transform="translate(425 190) scale(.3333)">
      <g class="s">
        <path d="M668 66l6-3 4 5 10-2-4 14-10 3z"/><path d="M698 96l20-4 14 12 4 8-14-2-20-8z"/><path d="M868 94l26-28 10 2-4 28-10-4-18 4z"/><path d="M966 86l18-2-8 12-10 6z"/><path d="M998 94l12 4 4 8-8 10-12-4z"/><path d="M912 134l10-6 14 4-4 10-18 0z"/><path d="M902 147l14 0-2 14-6 4-2-10z"/><path d="M244 344l8 2 2 12-10 4zM242 376l22-2 0 8-20 0z"/><path d="M62 344l10-4 20 14-2 10-10 4z"/><path d="M28 366l24-4 4 14-14 4z"/><path d="M104 322l10-2 2 30-10 2z"/><path d="M216 436l14-4 6 28-14 8z"/><path d="M324 482l8-6 24 2-2 10-22 0z"/><path d="M274 530l8-16 4 16-2 16-8-4z"/><path d="M502 460l12-4 6 10-2 16-12-6z"/><path d="M530 490l12-4 0 24-8 6z"/><path d="M874 348l24-2-4 10-14 2 0 20-6 2z"/><path d="M886 512l18-12 10 12 16-10-4 24-6 2z"/><path d="M204 268l14-3 6 5-16 4z"/><path d="M694 50l8-4 6 12-8 8zM650 108l8 6-2 8-6-2zM470 390l8-6 2 10zM548 388l6 2-4 14zM524 436l4 8 8 2z"/>
      </g>
      <g class="t">
        <path d="M652 108l12 2 38-58-14 20-12 50-26-2z"/><path d="M700 68l14-28 22 4 0 64-34-36z"/><path d="M752 94l24-4 0 16-4 18-14-8-6-6z"/><path d="M848 104l2-28 30-20 24 4-30 30z"/><path d="M924 114l12 16-12 4z"/><path d="M914 148l34 14 24 46-22 3z"/><path d="M992 104l10-12 8 16-8 8-10-2zM966 98l8-2 0 12-6 4z"/>
        <path d="M166 298l6-14 26-14 60-4 8 14-30 122-118-50 14-30 56 2-20-10z"/><path d="M104 322l12 6-2 24-12-4z"/><path d="M62 346l32 18-32 14zM26 372l28-8-6 18-16 4z"/><path d="M218 434l14 2 4 30-16 2z"/><path d="M340 482l12-2-4 6z"/><path d="M460 406l20-22-4 24z"/><path d="M524 444l28-58-6 54-10 4z"/><path d="M512 460l32 30-12 28z"/><path d="M828 390l2-12 46-26 20-4-16 16-46 24z"/><path d="M832 442l30 2-18 24z"/><path d="M880 520l50-12-4 10z"/><path d="M276 526l8-10-2 26z"/>
      </g>
      <g class="d"><path d="M200 290l4 2M212 286l5 5-4 4zM236 274l2 2M226 290l4-1M176 298l1 2M200 320l2-3M214 334l3 5M228 338l-4 8M232 350l3 2M154 348l-2-3M124 342l4-8M250 290l2 2M716 60l2 1M730 72l-2 8M724 88l3 2M940 186l4-4M950 200l4 2M765 102l4 2"/></g>
    </g>
    <!-- north-east cluster -->
    <g transform="translate(755 190) scale(.3333)">
      <g class="s">
        <path d="M78 108l10-6 12 2 0 10zM102 140l18-14 2 6-8 8 4 10-12 0z"/><path d="M46 174l8-12 6 24 0 20-12-8z"/><path d="M34 300l18-16 8 0-8 22-10 14-8-4z"/><path d="M194 112l8-2 2 32-10 2z"/><path d="M350 142l10-20 18-6-8 20-18 18z"/><path d="M392 64l26 2-2 16-16 4z"/><path d="M670 90l10-4 12 4 2 22-10-6z"/><path d="M748 174l12-24 4 20-14 14z"/><path d="M222 172l10-12 16 4 12-10 8 4-4 14 18-6 16-4 0 10-20 8-18 8-34 2z"/><path d="M196 192l16-2 4 8-14 2zM240 198l16-2-6 8zM282 238l8 6 8-2-4 14-8-6z"/><path d="M172 248l8 2 4 34-8-2z"/><path d="M202 280l8-12 20 2-12 14zM236 282l12 8-4 34-18 4z"/><path d="M266 290l10-4 14 8-6 14-12-4z"/><path d="M308 212l8-4 8 18-16 12z"/><path d="M536 450l14-2 14 12-2 8-24-8zM548 482l12-6 8 4zM576 482l8 0-2 26-8 4z"/><path d="M546 508l8-6 16 12 2 14-14 2z"/><path d="M454 486l-4 14 8 2zM742 500l36 12 2 24-10-6-20-14z"/><path d="M4 98l8-6 10 12-8 12z"/><path d="M166 226l6 8-4 8-4-6zM264 262l10-6 0 8zM472 500l4 8 4-8z"/>
      </g>
      <g class="t">
        <path d="M78 110l42 16-22 24z"/><path d="M198 192l40 14-14 34-32-6z"/><path d="M262 186l32 20-22 58-36 8z"/><path d="M166 228l24-10 2 14-24 10z"/><path d="M196 308l34-36 14 28-26 36z"/><path d="M222 186l16-22 18 18z"/><path d="M264 180l26-10 8 2-18 6z"/><path d="M308 228l8-18 8 8-8 16zM270 292l18 2-10 10z"/><path d="M462 452l74 22 10 24-92 4z"/><path d="M548 474l14-14 2 22zM576 482l20-10 4 20zM548 516l8-12 12 24z"/><path d="M740 494l34 16-26 6z"/><path d="M668 90l16-2 8 24zM404 74l12-8 2 10-8 8zM44 188l10-16 0 24zM44 300l12-14-2 16zM4 114l8-16 6 14zM754 172l8-18-2 20z"/>
      </g>
      <path class="hole" d="M468 474l8-6 10 8zM252 244l4-6 6 6-6 6zM764 512l6 2-4 6z"/>
      <g class="d"><path d="M206 204l2 3M220 218l4 4M276 214l6 4M286 210l4 0M226 284l3 2M236 290l-2 8M514 484l2 6M198 124v4M250 172l6 6M260 170l4 2"/></g>
    </g>
    <!-- south-west cluster -->
    <g transform="translate(530 450) scale(.3333)">
      <g class="s">
        <path d="M30 182l6-8 12 2-4 16-14 0z"/><path d="M48 250l10-20 8 6-10 18 0 10-8 0zM78 228l10 0-2 26-6 2z"/><path d="M386 128l8 2 4 12 10-6 8 6 8-4-6 8-34 20 8-20z"/><path d="M582 44l8-6 8 6-4 14-10-2z"/><path d="M322 196l28-6-2 18-10 2z"/><path d="M396 238l18-2-4 24-12 0z"/><path d="M520 284l12-6 8 8-4 8 6 10-12-8z"/><path d="M556 312l8 12 0 14-12 14-8-10zM556 362l12-16 8 14-2 22-12-4zM562 408l12-4 2 24-12 2z"/><path d="M140 418l16 6-4 20-12-8zM122 464l10-22 10 4-8 22z"/><path d="M246 474l30-2-6 8-24 4zM280 440l8-12 2 20z"/><path d="M428 516l10 14 0 10 10-4 8-12 4 12-18 12-8-14z"/><path d="M538 520l6-10 16-8 18 4-4 8-12-2-6 20-14 4zM506 558l6-12 6 8 14-8 2 16-14 10z"/><path d="M574 494l40-12-30 8zM560 530l12-6 4 20-12 8zM538 552l12-6 8 14-12 18-10-6zM486 498l36-8-4 8-24 16z"/>
      </g>
      <g class="t">
        <path d="M32 206l14-28 20 44z"/><path d="M68 234l12-14 6 36z"/><path d="M52 238l8-8-4 14z"/><path d="M382 166l24-14-4 12zM416 146l10-6-4 6z"/><path d="M324 194l28 0-14 16zM398 238l18-2-12 24z"/><path d="M556 312l4 16 4 10-12 16-8-4 2-12 8-6zM556 366l14-20 4 24zM564 410l10-4-2 22z"/><path d="M518 404l48-16-22 26z"/><path d="M142 424l14 2-6 16zM128 450l12-8-8 22z"/><path d="M242 472l46-44-12 46z"/><path d="M488 494l34-4-28 24zM438 544l20-18 0 18z"/><path d="M556 500l60-20-16 80-38-2z"/><path d="M508 564l22-4 0 24zM540 556l12-10 4 16-14 14z"/><path d="M584 50l12 2-4 10z"/>
      </g>
      <path class="hole" d="M552 510l14 0 12 8-12 8-8 4-8 6z"/>
      <g class="d"><path d="M578 498l4-1M588 522l2 2M572 536l3 2M574 554l2 4M276 452l-2 6M338 200l2 4M586 44l4 2M530 288l3 2M546 558l2 4"/></g>
    </g>
    <!-- south-east cluster -->
    <g transform="translate(790 470) scale(.3333)">
      <g class="s">
        <path d="M294 94l8-6 16 4-8 14-12 2z"/><path d="M364 68l10-14 8 12 4 14-8 4-10-10z"/><path d="M424 40l8-4 8 8 8-2 0 12 10 10-2 12-12 2-8 6-18-4 6-6 16-2 2-10-10-4z"/><path d="M418 104l12-6 8 4 2 18-8 8z"/><path d="M428 180l8 2-2 14-8-2zM398 206l8 12-4 2-8-8z"/><path d="M40 188l8-12 8 10-4 22-12-8zM552 118l12-20 8 6-4 20-14 4z"/><path d="M256 66l20-6-2 10z"/>
      </g>
      <g class="t">
        <path d="M204 104l18-20 52-24 0 22-54 40z"/><path d="M324 54l32-8 8 22-28 28z"/><path d="M386 110l22-14 32 16-6 18-22 28-26-18z"/><path d="M300 92l84 12 4 36 48 44-24 24-50 24z"/><path d="M40 190l10-10 6 20-8 4zM552 114l14-14 4 20-14 4z"/>
      </g>
      <g class="d"><path d="M222 94l8 2-6 6zM242 92l4-4M248 80l2 0M326 110l3 4M344 118l-2 8 12 10M360 126l2 4M330 128l2 0M394 122l8 0 0 10-6 2M418 110l3 3M408 122l4 6M366 160l2 1M376 160l3 0M386 158h8v4h-6M374 188l4 2-2 4M396 186l0 6M396 140l10 2M430 76l18-6M332 92l4 4"/></g>
    </g>
  </svg>
</main>

<footer class="status">
  <div class="find"><svg width="13" height="13" viewBox="0 0 13 13" fill="none" stroke="#888" stroke-width="1.400"><circle cx="5" cy="5" r="4.200"/><path d="M8 8l4.500 4.500"/></svg>Szukana fraza (Ctrl+K)</div>
  <span class="l1">Współrzędne</span><div class="fld coord">-657131&nbsp; 3469647</div>
  <svg class="mouse" width="17" height="17" viewBox="0 0 17 17"><path d="M1 5l8-2 2 4-7 4zM3 9l4 6M1 2l4 3M4 1l3 4" fill="#444" stroke="#222"/><rect x="7" y="6" width="7" height="10" rx="3.500" fill="#fff" stroke="#222" transform="rotate(-25 10 11)"/><path d="M10 5q1-4 6-4M8 10l5-2" stroke="#222" fill="none"/></svg>
  <span class="l2">Skala</span><div class="fld scale">1:7552119<i class="arr"></i></div>
  <svg class="lock" width="13" height="16" viewBox="0 0 13 16"><path d="M3 8V4.500a3.500 3.500 0 0 1 7 0V8" fill="none" stroke="#777" stroke-width="2"/><rect x=".500" y="7" width="12" height="8.500" rx="1" fill="#555"/></svg>
  <span class="l3">Powiększenie</span><div class="fld mag">100%<i class="spin"></i></div>
  <span class="l4">Obrót</span><div class="fld rot">0,0 °<i class="spin"></i></div>
  <s class="c y"></s><span class="l5">Renderuj</span>
  <svg class="crs" width="15" height="14" viewBox="0 0 15 14" fill="none" stroke="#777"><path d="M.800 7l6.700-6.300L14.200 7l-6.700 6.300z" fill="#ccc"/><path d="M1 7h13M7.500 1v12M3 4h9M3 10h9M7.500 1q-6 6 0 12M7.500 1q6 6 0 12"/></svg>
  <span class="l6">EPSG:2964</span>
  <svg class="chat" width="16" height="15" viewBox="0 0 16 15"><path d="M8 1c9 0 9 11 2 11l4 3-7-3C-2 11-1 1 8 1z" fill="#666"/><path d="M4 6.500h2M7.200 6.500h2M10.400 6.500h2" stroke="#fff" stroke-width="1.600"/></svg>
</footer>

<div class="taskbar">
  <div class="start"><svg width="16" height="16" viewBox="0 0 16 16" fill="#fff"><path d="M0 2l7-1v6.500H0zM8 1l8-1v7.500H8zM0 8.500h7V15l-7-1zM8 8.500h8V16l-8-1z"/></svg></div>
  <div class="search"><svg width="17" height="17" viewBox="0 0 17 17" fill="none" stroke="#ddd" stroke-width="1.300"><circle cx="10.500" cy="6" r="5.200"/><path d="M7 10L.800 16.200"/></svg>Wyszukaj</div>
  <div class="app view"><svg width="18" height="16" viewBox="0 0 18 16" fill="none" stroke="#fff"><path d="M1.500 4.500h10v7h-10zM1.500 2.500v-2M11.500 2.500v-2M1.500 13.500v2M11.500 13.500v2M1.500 1.500h10M1.500 14.500h10M15.500 0v3M15.500 8v7"/><path d="M14 5.500h3" stroke-width="3"/></svg></div>
  <div class="app"><svg viewBox="0 0 24 24"><circle cx="12" cy="12" r="12" fill="#0f70c8"/><path d="M0 12A12 12 0 0 1 24 11c0 4-3 6-6 6-4 0-4-2-3-4 1-5-7-8-12-4z" fill="url(#gEdge)"/><path d="M0 13c1-8 13-8 13-2-4 1-5 6-1 9 3 2 7 1 9 0A12 12 0 0 1 0 13z" fill="#137fd4"/><path d="M9 12c0 6 5 9 12 8-5 6-14 4-15-3z" fill="#0a4e9d"/></svg></div>
  <div class="app run"><svg viewBox="0 0 24 24"><path d="M2 3h7l2 3h12v15H2z" fill="#e9a21c"/><path d="M2 8h21v13H2z" fill="#ffd35f"/><path d="M6 22v-8h14v8h-4v-4h-6v4z" fill="#2f94e2"/></svg></div>
  <div class="app"><svg viewBox="0 0 24 24" class="pgd"><use href="#elephant"/></svg></div>
  <div class="app"><svg viewBox="0 0 24 24"><path d="M7 7V2h10v5" fill="none" stroke="#32b2ed" stroke-width="2"/><rect x="1" y="5" width="22" height="18" rx="2" fill="#fff"/><path d="M8 9h4v4H8z" fill="#f25022"/><path d="M13 9h4v4h-4z" fill="#7fba00"/><path d="M8 14h4v4H8z" fill="#00a4ef"/><path d="M13 14h4v4h-4z" fill="#ffb900"/></svg></div>
  <div class="app"><svg viewBox="0 0 24 24"><path d="M0 8l12-7 12 7v14H0z" fill="#1266af"/><path d="M2 8h20v7H2z" fill="#f7f7f7"/><path d="M0 8l12 8L24 8v14H0z" fill="#35b6f1"/><path d="M0 22l24-14v14z" fill="#1897e2"/></svg></div>
  <div class="app run"><svg viewBox="0 0 26 24" class="teams"><circle cx="13" cy="4" r="3.500" fill="#7b83eb"/><circle cx="20" cy="5" r="2.500" fill="#5059c9"/><path d="M8 8h16v7q-4 8-12 5z" fill="#5b63d3"/><path d="M1 7h11v11H1z" fill="#4b53bc"/><path d="M4 10h5M6.500 10v6" stroke="#fff" stroke-width="1.500"/><circle cx="18.500" cy="17" r="7" fill="#13a10e"/><path d="M15.500 17l2 2 4-4" fill="none" stroke="#063a05" stroke-width="1.500"/></svg></div>
  <div class="app run"><svg viewBox="0 0 24 24"><circle cx="12" cy="12" r="12" fill="#34a853"/><path d="M12 6h10.400A12 12 0 0 1 12 24l5-9z" fill="#fbbc05"/><path d="M1.600 6A12 12 0 0 1 22.400 6H12L7 14z" fill="#ea4335"/><circle cx="12" cy="12" r="5.800" fill="#fff"/><circle cx="12" cy="12" r="4.500" fill="#1a73e8"/></svg></div>
  <div class="app run active"><svg viewBox="0 0 24 24"><use href="#qgis"/></svg></div>
  <div class="app run notes"><svg viewBox="0 0 24 24"><path d="M7 2h14v14l-4 5z" fill="#c9d2d4"/><path d="M7 3l12-1-5 17-13 0z" fill="url(#gNote)"/><path d="M19 3l3 15-7 3-1-2z" fill="#9caaad"/><path d="M7 2.500l13-1" stroke="#666" stroke-width="2" stroke-dasharray="1 1"/></svg></div>
  <div class="tray">
    <svg class="temp" width="20" height="24" viewBox="0 0 20 24"><path d="M0 5h8v5L6 7 5 12 4 8 2 11z" fill="#84b9de"/><path d="M11 14V4q3-6 6 0v10q4 7-3 9-7-2-3-9z" fill="#e9f4fb" stroke="#bad5e4"/><circle cx="14" cy="18" r="3.500" fill="#168bdf"/><path d="M14 8v10" stroke="#168bdf" stroke-width="2"/></svg>
    <span class="wx">Odc...</span>
    <svg width="136" height="20" viewBox="1109 738 136 20" fill="none" stroke="#fff"><path d="M1109 751l6-6 6 6" stroke-width="1.200"/><path d="M1134.500 744h7v9h-7zM1141.500 747l3-2v7l-3-2M1136 741q3-2 6 0M1136 756q3 2 6 0"/><path d="M1155.500 743l13-2v13h-13zM1159 748c1-3 5-3 6 0M1165 745v3h-2M1159 751q3 3 6-1"/><circle cx="1167" cy="752" r="3.800" fill="#f90" stroke="none"/><path d="M1183.500 744.500h11v7h-11z"/><path d="M1185 746h7v4h-7z" fill="#fff"/><path d="M1180 741v3h4v-3M1182 744v5h2M1181 740v2M1183.500 740v2"/><path d="M1206 748q4-5 11-5M1207 752q4-6 10-6M1209 754q3-5 8-5M1212 755q2-3 5-3" stroke="#ccc"/><circle cx="1215.500" cy="754" r="1.200" fill="#fff" stroke="none"/><path d="M1227.500 746h3l4-4v12l-4-4h-3zM1236 745q2 3 0 6M1238 743q3 5 0 10M1240 741q4 7 0 14"/></svg>
    <div class="clock">17:13<br>13.11.2024</div>
    <svg class="notif" width="17" height="17" viewBox="0 0 17 17" fill="none" stroke="#fff" stroke-width="1.200"><path d="M.600 1.600h15.800v11H11l-2.500 3-2.500-3H.600z"/></svg>
    <i class="desk"></i>
  </div>
</div>
</body>
</html>
```

FILE: styles.css
```css
* { box-sizing: border-box; }
html, body { margin: 0; height: 100%; overflow: hidden; }
body { width: 1366px; height: 768px; display: flex; flex-direction: column; background: #efefef; color: #000; font: 12px/18px "Noto Sans", "Open Sans", sans-serif; letter-spacing: -.3px; }
s { text-decoration: none; }
.defs { display: block; flex: none; height: 0; }
svg { flex: none; }

.titlebar { height: 23px; flex: none; background: #fff; display: flex; align-items: center; }
.logo { width: 16px; height: 16px; margin-left: 2px; }
.caption { margin-left: 5px; white-space: nowrap; letter-spacing: -.42px; }
.winctl { margin-left: auto; margin-right: 10px; }

.menu { height: 19px; flex: none; display: flex; padding-left: 10px; line-height: 21px; border-bottom: 1px solid #d5d5d5; letter-spacing: -.38px; }
.menu span { flex: none; white-space: nowrap; }
.menu u { text-underline-offset: 2px; text-decoration-thickness: 1px; }

.toolbar { height: 40px; flex: none; display: flex; align-items: center; background: linear-gradient(#fbfbfb, #ededed); border-bottom: 1px solid #b3b3b3; letter-spacing: 0; }
.toolbar.second { border-bottom: 2px solid #b3b3b3; padding-bottom: 1px; }
.toolbar b { width: 33px; height: 31px; flex: none; display: flex; align-items: center; justify-content: center; }
.toolbar b svg { width: 24px; height: 24px; overflow: visible; }
.toolbar .framed { width: 32px; margin-right: 1px; background: #fff; border: 1px solid #b8b8b8; border-radius: 3px; }
.toolbar .pressed { width: 32px; margin-right: 1px; background: #dadada; border: 1px solid #aaa; border-radius: 3px; }
.off svg { opacity: .36; filter: grayscale(.6); }
.grip { width: 16px; height: 17px; flex: none; background: radial-gradient(circle, #aaa 35%, transparent 40%) 9px 0 repeat-y, radial-gradient(circle, #aaa 35%, transparent 40%) 12px 0 repeat-y; background-size: 2px 3px; }
.grip.first { width: 12.5px; background-position: 5px 0, 8px 0; }
.rule { width: 1px; height: 20px; margin: 0 3px; background: #ccc; flex: none; }
.arr { width: 12px; flex: none; display: flex; justify-content: center; }
.arr::after { content: ""; border: 4px solid transparent; border-top: 4px solid #555; border-bottom: 0; }
.toolbar .arr { padding-right: 2px; }
.arr.pale::after { border-top-color: #aaa; }
.arr.dim::after { border-top-color: #888; }
.corner { position: relative; }
.corner::after { content: ""; position: absolute; right: 2px; bottom: 2px; border: 3px solid transparent; border-top: 3px solid #444; border-bottom: 0; }
.tag text { font: 700 8.5px "DejaVu Sans", sans-serif; letter-spacing: -.5px; }
.serif { font-family: "Liberation Serif", serif; }
.pg { fill: #5f8dc0; stroke: #2f5884; }
.pgd { fill: #336791; stroke: #bfd2e4; }

.work { flex: none; height: 577px; display: flex; }
.dock { width: 301px; flex: none; border-right: 1px solid #ababab; }
.dock h2 { margin: 0; width: 293px; height: 18px; padding-left: 4px; font-size: 12px; font-weight: 400; line-height: 18px; display: flex; align-items: center; justify-content: space-between; letter-spacing: -.4px; }
.browser { height: 273px; }
.mini { height: 31px; display: flex; align-items: center; padding: 0 0 1px 7px; }
.mini b { width: 17px; height: 18px; margin-right: 8px; flex: none; }
.mini b svg { width: 16px; height: 16px; display: block; margin: 1px auto; }
.mini .arr { margin: 0 4px 0 -4px; }
.pane { width: 294px; height: 225px; display: flex; border: 1px solid #b3b3b3; background: #fff; overflow: hidden; }
.tree { flex: 1; margin: 1px 0 0; padding: 0; list-style: none; overflow: hidden; letter-spacing: -.45px; }
.tree li { height: 18px; display: flex; align-items: center; padding-left: 19px; white-space: nowrap; line-height: 18px; }
.tree li > svg { width: 16px; height: 16px; margin-right: 6px; }
.tree .fold { padding-left: 0; }
.fold::before { content: ""; margin: 0 8px 1px 6px; border: 4px solid transparent; border-left: 5px solid #555; border-right: 0; }
.scroll { width: 14px; flex: none; border-left: 1px solid #b3b3b3; display: flex; flex-direction: column; background: #fff; }
.scroll i { display: flex; align-items: center; justify-content: center; flex: none; }
.su, .sd { height: 13px; }
.su::after { content: ""; border: 4px solid transparent; border-bottom: 4px solid #555; border-top: 0; }
.sd::after { content: ""; border: 4px solid transparent; border-top: 4px solid #555; border-bottom: 0; }
.su { border-bottom: 1px solid #b3b3b3; }
.scroll .sd { border-top: 1px solid #b3b3b3; flex: 1; padding-bottom: 2px; }
.stub { height: 12px; background: #e2e2e2; border-bottom: 1px solid #b3b3b3; }
.one .thumb { height: 130px; }
.rest { background: #e2e2e2; border-top: 1px solid #b3b3b3; }
.one .rest { height: 54px; }
.two .thumb { height: 120px; }
.two .rest { height: 99px; }
.split { height: 7px; width: 294px; background: repeating-linear-gradient(90deg, #aaa 0 1px, transparent 1px 3px) 140px 3px / 17px 1px no-repeat; }
.layers h2 { height: 19px; }
.mini.lay { height: 31px; }
.lay .corner::after { right: -1px; bottom: -1px; }
.layers .pane { height: 248px; }
.lyr { font-weight: 700; font-style: italic; color: #7d7d7d; letter-spacing: .1px; }
.tree.lyr li { padding-left: 23px; }
.tree.lyr .on { font-style: normal; color: #000; letter-spacing: -.45px; }
.tree.lyr .cur { background: #efefef; letter-spacing: -.75px; }
.cur span { text-decoration: underline; }
.c { width: 14px; height: 14px; flex: none; border: 1px solid #b3b3b3; background: #fff; display: block; }
.lyr .c { margin-bottom: 1px; }
.y::after { content: ""; display: block; width: 4px; height: 8px; margin: 0 0 0 4px; border: solid #000; border-width: 0 2px 2px 0; transform: rotate(40deg); }
.sw { width: 16px; height: 16px; flex: none; margin: 0 6px 1px; border: 1px solid #333; }
.tan { background: #bdb194; } .green { background: #719b6f; } .orange { background: #ff9e17; } .purple { background: #8d5a99; } .slate { background: #7c898d; }
.dot { width: 8px; height: 8px; margin: 0 10px 2px; border: 1px solid #333; border-radius: 50%; flex: none; }
.lime { background: #b7ce44; } .gold { background: #e0b12f; } .leaf { background: #6f9d6b; } .red { background: #e31a1c; }
.line { width: 14px; height: 2px; margin: 0 6px; background: #b48a73; flex: none; }
.tree.lyr .ed { width: 13px; height: 14px; margin: 0 7px 2px 8px; }
.lyr em { margin: 0 5px 1px auto; width: 17px; height: 17px; border: 1px solid #ddd; border-radius: 2px; display: flex; align-items: center; justify-content: center; background: #fafafa; }
.lyr em svg { width: 14px; height: 12px; }

.canvas { background: #fff; display: block; }
.canvas .t path { fill: #bdb194; stroke: #303030; stroke-width: 3.6px; stroke-linejoin: round; }
.canvas .s path { fill: #7b898d; stroke: #303030; stroke-width: 3.8px; stroke-linejoin: round; stroke-dasharray: 9 1; }
.canvas .d path { fill: none; stroke: #222; stroke-width: 3.6px; stroke-linecap: round; }
.canvas .hole { fill: #fff; stroke: #303030; stroke-width: 3px; }

.status { height: 29px; flex: none; border-top: 1px solid #b3b3b3; display: flex; align-items: center; padding: 1px 0 0 4px; font-size: 11.5px; white-space: nowrap; letter-spacing: -.4px; }
.find, .fld { height: 22px; background: #fff; border: 1px solid #a6a6a6; border-radius: 3px; display: flex; align-items: center; flex: none; padding-left: 5px; }
.find { width: 200px; color: #808080; padding-left: 7px; font-size: 11px; letter-spacing: -.15px; }
.find svg { margin-right: 7px; }
.status span { flex: none; }
.l1 { width: 67px; margin-left: 330px; letter-spacing: -.65px; }
.coord { width: 109px; padding-left: 9px; letter-spacing: -.05px; }
.mouse { margin-left: 4px; }
.l2 { width: 29px; margin-left: 11px; letter-spacing: -.5px; }
.scale { width: 81px; padding-left: 4px; letter-spacing: -.15px; }
.scale .arr { width: 19px; height: 20px; margin-left: auto; border-left: 1px solid #b3b3b3; align-items: center; }
.lock { margin-left: 12px; }
.l3 { width: 67px; margin-left: 7px; letter-spacing: -.7px; }
.mag { width: 84px; }
.l4 { width: 38px; margin-left: 8px; }
.rot { width: 84px; padding-left: 4px; }
.spin { width: 14px; height: 20px; margin-left: auto; border-left: 1px solid #b3b3b3; display: flex; flex-direction: column; justify-content: center; align-items: center; gap: 5px; }
.spin::before { content: ""; border: 3.5px solid transparent; border-bottom: 4px solid #555; border-top: 0; }
.spin::after { content: ""; border: 3.5px solid transparent; border-top: 4px solid #555; border-bottom: 0; }
.status .c { margin-left: 6px; }
.l5 { width: 56px; margin-left: 4px; letter-spacing: -.6px; }
.crs { margin-left: 5px; }
.l6 { width: 56px; margin-left: 1px; }
.chat { margin-left: 21px; }

.taskbar { height: 40px; flex: none; background: #2a2329; color: #fff; display: flex; font-size: 14px; }
.start { width: 48px; display: flex; align-items: center; justify-content: center; flex: none; }
.search { width: 288px; flex: none; background: #333; border: 1px solid #5b5b5b; display: flex; align-items: center; padding-left: 12px; color: #d8d8d8; letter-spacing: -.25px; }
.search svg { margin-right: 10px; }
.app { width: 49px; flex: none; display: flex; align-items: center; justify-content: center; position: relative; }
.view { margin-right: 1.5px; }
.app svg[viewBox="0 0 24 24"], .app .teams { width: 24px; height: 24px; }
.run::after { content: ""; position: absolute; left: 4px; right: 5px; bottom: 0; height: 2px; background: #76b9ed; }
.active { background: #554f54; border-right: 1px solid #777; }
.active::after { left: 0; right: 0; }
.notes::after { left: 5px; right: 4px; }
.tray { margin-left: auto; display: flex; align-items: center; letter-spacing: 0; }
.temp { position: relative; left: 1px; }
.wx { width: 46px; margin: 0 14px 0 13px; font-size: 13.5px; letter-spacing: -.1px; }
.clock { width: 60px; margin-left: 6px; text-align: center; font-size: 11px; line-height: 18px; letter-spacing: -.3px; }
.notif { margin-left: 15px; }
.desk { width: 5px; height: 40px; margin-left: 19px; border-left: 1px solid #666; }
```
